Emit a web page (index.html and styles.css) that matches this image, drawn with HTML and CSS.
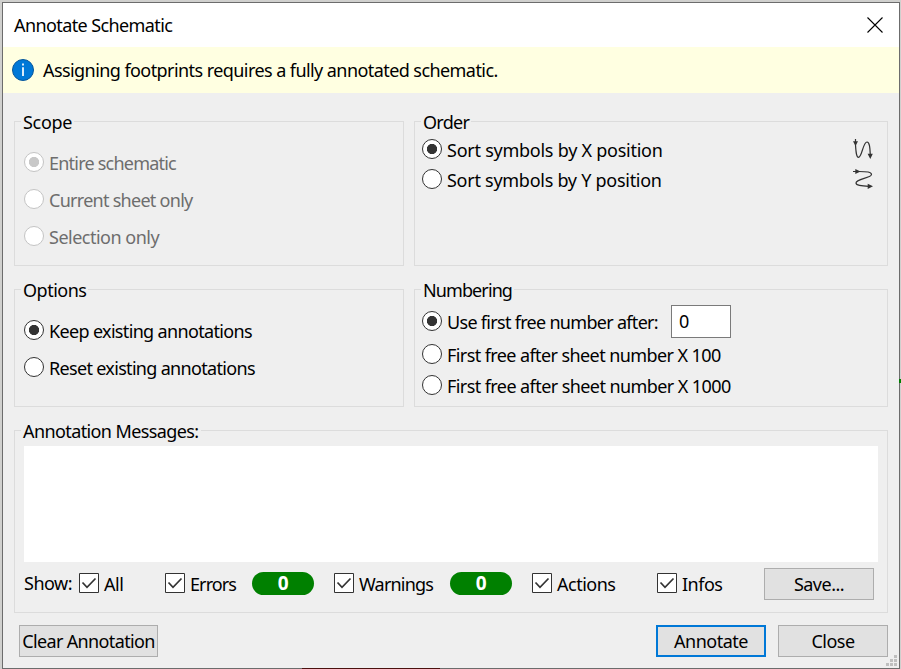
FILE: index.html
```
<!DOCTYPE html>
<html lang="en">
<head>
<meta charset="utf-8">
<title>Annotate Schematic</title>
<link rel="stylesheet" href="styles.css">
</head>
<body>
<div class="window">
  <header class="titlebar">
    <span class="t-title">Annotate Schematic</span>
    <svg class="close-icon" width="16" height="16" viewBox="0 0 16 16"><path d="M.5.5l15 15M15.500.5l-15 15" stroke="#000" stroke-width="1.1" fill="none"/></svg>
  </header>
  <div class="infobar">
    <svg width="22" height="22" viewBox="0 0 22 22"><circle cx="11" cy="11" r="10.500" fill="#0078d7" stroke="#07579b"/><path d="M11 8.200v8.800M11 4.500v2" stroke="#fff" stroke-width="1.700"/></svg>
    <span class="t-info">Assigning footprints requires a fully annotated schematic.</span>
  </div>
  <main class="content">
    <div class="groups">
      <section class="group scope">
        <h2 class="t-scope">Scope</h2>
        <label class="choice disabled"><i class="radio on"></i><span class="t-entire">Entire schematic</span></label>
        <label class="choice disabled"><i class="radio"></i><span class="t-current">Current sheet only</span></label>
        <label class="choice disabled"><i class="radio"></i><span class="t-selection">Selection only</span></label>
      </section>
      <section class="group order">
        <h2 class="t-order">Order</h2>
        <div class="choice"><i class="radio on"></i><span class="t-sortx">Sort symbols by X position</span>
          <svg class="sort-icon" width="22" height="22" viewBox="0 0 22 22"><path d="M3.500 1v6C4 15 4.500 19.300 6.500 19.300C10 19.300 11 4 15 4C17.500 4 18 9 18.300 17" fill="none" stroke="#333" stroke-width="1.200"/><path d="M1 3.300h5L3.500 8zM15.600 15.700h5.200L18.300 21z" fill="#333"/></svg></div>
        <div class="choice"><i class="radio"></i><span class="t-sorty">Sort symbols by Y position</span>
          <svg class="sort-icon" width="22" height="22" viewBox="0 0 22 22"><path d="M1 3.500h6C15 3.500 19.500 4 19.500 6.500C19.500 10 4 11 4 15C4 17.500 9 18 17 18.300" fill="none" stroke="#333" stroke-width="1.200"/><path d="M3.300 1v5L8.500 3.500zM15.700 15.700v5.200L21 18.300z" fill="#333"/></svg></div>
      </section>
      <section class="group options">
        <h2 class="t-options">Options</h2>
        <label class="choice"><i class="radio on"></i><span class="t-keep">Keep existing annotations</span></label>
        <label class="choice"><i class="radio"></i><span class="t-reset">Reset existing annotations</span></label>
      </section>
      <section class="group numbering">
        <h2 class="t-numbering">Numbering</h2>
        <div class="choice first"><i class="radio on"></i><span class="t-use">Use first free number after:</span><span class="field">0</span></div>
        <div class="choice"><i class="radio"></i><span class="t-hundred">First free after sheet number X 100</span></div>
        <div class="choice last"><i class="radio"></i><span class="t-thousand">First free after sheet number X 1000</span></div>
      </section>
    </div>
    <section class="group messages">
      <h2 class="t-messages">Annotation Messages:</h2>
      <div class="log"></div>
      <div class="filters">
        <span class="show t-show">Show:</span>
        <label class="check all"><svg width="20" height="20" viewBox="0 0 20 20"><path class="box" d="M.5.500h19v19H.5z"/><path class="tick" d="M3.500 9.500l4.500 4.800L16.500 5.500"/></svg><span class="t-all">All</span></label>
        <label class="check errors"><svg width="20" height="20" viewBox="0 0 20 20"><path class="box" d="M.5.500h19v19H.5z"/><path class="tick" d="M3.500 9.500l4.500 4.800L16.500 5.500"/></svg><span class="t-errors">Errors</span></label>
        <span class="badge">0</span>
        <label class="check warnings"><svg width="20" height="20" viewBox="0 0 20 20"><path class="box" d="M.5.500h19v19H.5z"/><path class="tick" d="M3.500 9.500l4.500 4.800L16.500 5.500"/></svg><span class="t-warnings">Warnings</span></label>
        <span class="badge">0</span>
        <label class="check actions"><svg width="20" height="20" viewBox="0 0 20 20"><path class="box" d="M.5.500h19v19H.5z"/><path class="tick" d="M3.500 9.500l4.500 4.800L16.500 5.500"/></svg><span class="t-actions">Actions</span></label>
        <label class="check infos"><svg width="20" height="20" viewBox="0 0 20 20"><path class="box" d="M.5.500h19v19H.5z"/><path class="tick" d="M3.500 9.500l4.500 4.800L16.500 5.500"/></svg><span class="t-infos">Infos</span></label>
        <button class="btn save"><span class="t-save">Save...</span></button>
      </div>
    </section>
    <footer class="actions-row">
      <button class="btn clear"><span class="t-clear">Clear Annotation</span></button>
      <button class="btn primary"><span class="t-annotate">Annotate</span></button>
      <button class="btn"><span class="t-close">Close</span></button>
    </footer>
  </main>
  <svg class="grip" width="12" height="12" viewBox="0 0 12 12"><path d="M8 0h3v3H8zM4 4h3v3H4zM8 4h3v3H8zM0 8h3v3H0zM4 8h3v3H4zM8 8h3v3H8z" fill="#bfbfbf"/></svg>
</div>
<div class="trace-red"></div>
<div class="trace-green"></div>
</body>
</html>
```
FILE: styles.css
```
* { box-sizing: border-box; }
body {
  margin: 0;
  width: 901px;
  height: 669px;
  padding: 2px 1px 0 2px;
  overflow: hidden;
  background: #d0d0ce;
  color: #000;
  font: 400 18px/24px "Noto Sans", "Open Sans", sans-serif;
  letter-spacing: -0.5px;
}
.window {
  position: relative;
  width: 898px;
  height: 667px;
  border: 1px solid #6c6c6c;
  background: #efefef;
}
span, h2 { white-space: nowrap; }
.titlebar {
  display: flex;
  align-items: center;
  justify-content: space-between;
  height: 44px;
  padding: 0 16px 0 11px;
  background: #fff;
}
.close-icon { margin-top: -1px; }
.infobar {
  display: flex;
  align-items: center;
  gap: 9px;
  height: 46px;
  padding-left: 9px;
  background: #ffffe1;
}
.content { padding: 28px 11px 0; }
.groups {
  display: grid;
  grid-template-columns: 390px 474px;
  grid-template-rows: 145px 118px;
  gap: 23px 10px;
}
.group { border: 1px solid #dcdcdc; min-width: 0; }
h2 {
  width: max-content;
  height: 24px;
  margin: -12px 0 0 6px;
  padding: 0 2px;
  background: #efefef;
  font-size: 18px;
  font-weight: inherit;
}
.choice { display: flex; align-items: center; gap: 5px; height: 37px; padding-left: 9px; }
.choice > span { margin-top: 3px; }
.radio {
  flex: none;
  width: 20px;
  height: 20px;
  border: 1px solid #333;
  border-radius: 50%;
  background: #fff;
}
.radio.on { background: radial-gradient(circle, #333 0 4.8px, #fff 5.400px); }
.disabled { color: #6d6d6d; }
.disabled .radio { border-color: #c4c4c4; }
.disabled .radio.on { background: radial-gradient(circle, #c8c8c8 0 4.800px, #fff 5.400px); }
.scope h2 { margin-bottom: 9px; }
.options h2 { margin-bottom: 9px; }
.order .choice { height: 30px; padding-left: 7px; }
.order .choice > span { margin-top: 1px; }
.order h2 { margin-bottom: 0; }
.sort-icon { margin-left: auto; margin-right: 13px; }
.numbering .choice { height: 32px; padding-left: 7px; }
.numbering .choice > span { margin-top: 1px; }
.numbering h2 { margin-bottom: 2px; }
.numbering .first { height: 34px; }
.numbering .last { height: 30px; }
.numbering .choice > .field {
  width: 60px;
  height: 33px;
  margin: 1px 0 0 8px;
  padding: 3px 7px;
  border: 1px solid #7a7a7a;
  background: #fff;
}
.messages { height: 183px; margin-top: 23px; }
.messages h2 { margin-bottom: 3px; }
.log { height: 116px; margin: 0 9px; background: #fff; }
.filters { display: flex; align-items: center; height: 44px; padding: 0 13px 0 9px; }
.show { width: 55px; margin-top: -2px; }
.check { display: flex; align-items: center; gap: 5px; }
.check svg { margin-top: -2px; }
.box { fill: #fff; stroke: #333; }
.tick { fill: none; stroke: #333; stroke-width: 1.700; }
.all { width: 86px; }
.errors { width: 87px; }
.warnings { width: 116px; }
.actions { width: 125px; }
.infos { width: 107px; }
.badge {
  width: 62px;
  height: 23px;
  margin: -2px 20px 0 0;
  border-radius: 12px;
  background: #008000;
  color: #fff;
  font-size: 19px;
  font-weight: 700;
  line-height: 23px;
  text-align: center;
}
.btn {
  display: flex;
  align-items: center;
  justify-content: center;
  width: 110px;
  height: 32px;
  padding: 0;
  border: 1px solid #adadad;
  background: #e1e1e1;
  color: #000;
  font: inherit;
  letter-spacing: inherit;
}
.actions-row { display: flex; gap: 12px; margin-top: 12px; padding-left: 5px; }
.clear { width: 139px; margin-right: auto; }
.primary { border: 2px solid #0078d7; }
.grip { position: absolute; right: 1px; bottom: 1px; }
.trace-red { position: absolute; left: 302px; top: 668px; width: 138px; height: 1px; background: #4a1210; }
.trace-green { position: absolute; left: 899px; top: 379px; width: 2px; height: 4px; background: #008000; }

.t-title { letter-spacing: -0.6px; }
.t-info { letter-spacing: -0.57px; }
.t-scope { letter-spacing: -0.3px; }
.t-entire { letter-spacing: -0.78px; }
.t-current { letter-spacing: -0.72px; }
.t-order { letter-spacing: -0.7px; }
.t-sortx { letter-spacing: -0.25px; }
.t-sorty { letter-spacing: -0.27px; }
.t-keep { letter-spacing: -0.66px; }
.t-reset { letter-spacing: -0.68px; }
.t-numbering { letter-spacing: -0.9px; }
.t-use { letter-spacing: -0.7px; }
.t-hundred { letter-spacing: -0.59px; }
.t-thousand { letter-spacing: -0.58px; }
.t-messages { letter-spacing: -0.6px; }
.t-errors { letter-spacing: -0.9px; }
.t-warnings { letter-spacing: -0.8px; }
.t-clear { letter-spacing: -0.63px; }
```
